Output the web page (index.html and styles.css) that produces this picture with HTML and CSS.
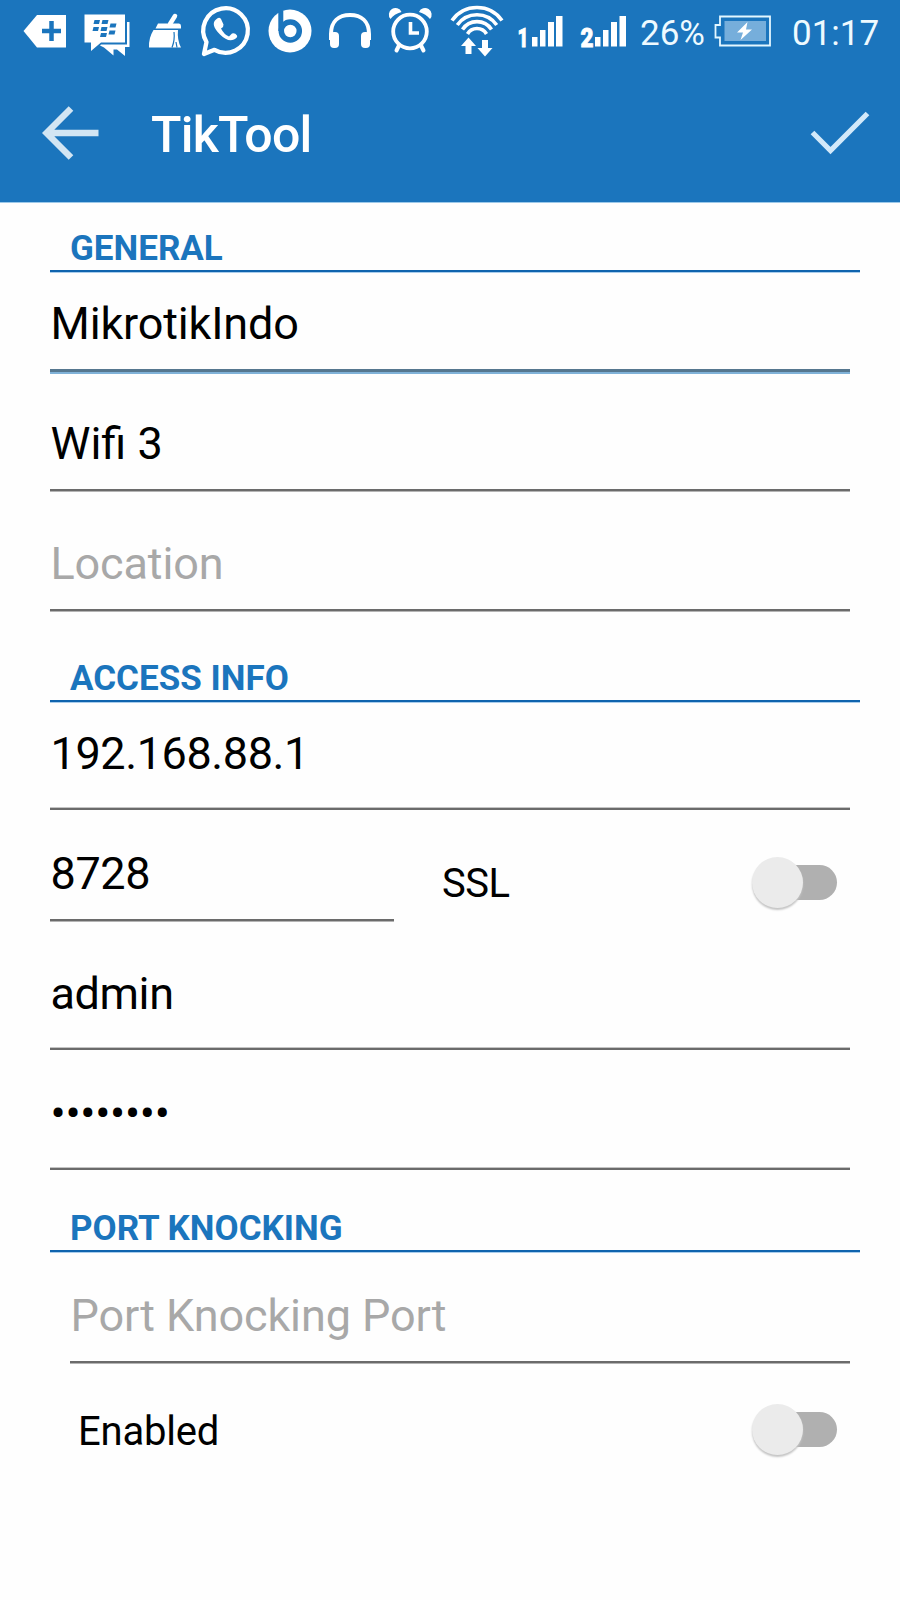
FILE: index.html
```
<!DOCTYPE html>
<html lang="en">
<head>
<meta charset="utf-8">
<title>TikTool</title>
<link rel="stylesheet" href="styles.css">
</head>
<body>
<header class="top">
  <div class="status">
    <svg width="75" height="70" viewBox="0 0 75 70"><path fill="#fff" d="M23.500 31L37 15H66V47.500H37Z"/><path stroke="#1b75bd" stroke-width="4.500" d="M51.500 21V41M42 31H61"/></svg>
    <svg width="65" height="70" viewBox="75 0 65 70"><path fill="#fff" d="M127 22H129.500V47H125V56L117 49.500L113.500 49.500V55.500L104 47.500L100 45.500L101 44.500H127Z"/><path fill="#fff" d="M84.500 14.500H125V42.500H101L91 51V42.500H84.500Z"/><path fill="#1b75bd" d="M94.500 20h5.500l-1 4h-5.500zM102.500 20h6l-1 4h-6zM93.500 27h5.500l-1 4h-5.500zM101.500 27h6l-1 4h-6zM110.500 23.500h6l-1 4h-6zM109.500 30.500h6l-1 4h-6zM101 33h6l-1 4h-6z"/></svg>
    <svg width="50" height="70" viewBox="140 0 50 70"><path stroke="#fff" stroke-width="4.500" stroke-linecap="round" d="M175 16L170 24"/><path fill="#fff" d="M158 23.500H179Q181 23.500 181 26V28.500H155.500ZM153.500 30H178Q177 40 181 47.500H149Q148.500 38 153.500 30Z"/><path stroke="#1b75bd" stroke-width="1.200" fill="none" d="M172 47.500Q175 40 174 32M177 47.500L176 42"/></svg>
    <svg width="70" height="70" viewBox="190 0 70 70"><path fill="none" stroke="#fff" stroke-width="4.300" stroke-linejoin="round" d="M206.500 42A22.300 22.300 0 1 1 214.500 49.800L204 54Z"/><path fill="#fff" d="M216 19.500Q219 16.500 221 19L223.500 24.500Q224 26.500 221 28.500Q224 34.500 229 36.500L232 33.500Q235 32.500 237 35.500Q238 37.500 234 39.500Q228 42.500 220 34.500Q210 24.500 216 19.500Z"/></svg>
    <svg width="60" height="70" viewBox="260 0 60 70"><circle cx="290" cy="31" r="21.500" fill="#fff"/><circle cx="290.300" cy="31" r="9" fill="none" stroke="#1b75bd" stroke-width="5.500"/><path stroke="#1b75bd" stroke-width="5" d="M280.800 11V31"/></svg>
    <svg width="60" height="70" viewBox="320 0 60 70"><path fill="none" stroke="#fff" stroke-width="4" d="M331 40V34C331 21 339 15 350 15S369 21 369 34V40"/><rect x="330" y="32" width="9" height="16" rx="4" fill="#fff"/><rect x="361" y="32" width="9" height="16" rx="4" fill="#fff"/></svg>
    <svg width="65" height="70" viewBox="380 0 65 70"><circle cx="410" cy="31.500" r="16.800" fill="none" stroke="#fff" stroke-width="3.800"/><path fill="none" stroke="#fff" stroke-width="3.600" d="M410.500 22V33H419"/><path stroke="#fff" stroke-width="4" stroke-linecap="round" d="M399 45.500L396.500 50.500M421 45.500L423.500 50.500"/><path fill="#fff" d="M390.500 19A6.600 6.600 0 1 1 401.500 12Q394 14 390.500 19ZM430 19A6.600 6.600 0 1 0 419 12Q426 14 430 19Z"/></svg>
    <svg width="65" height="70" viewBox="445 0 65 70"><g fill="none" stroke="#fff" stroke-width="3.600"><path d="M452 20.500A30.500 30.500 0 0 1 502 20.500M457.300 25A24 24 0 0 1 496.700 25M462.500 29.500A17.300 17.300 0 0 1 491.500 29.500M467.500 34A11 11 0 0 1 486.500 34"/></g><path fill="#fff" d="M468.500 37.500L476 46H471.500V54H465.500V46H461ZM485 56.500L477.500 48H482V40H488V48H492.500Z"/></svg>
    <svg width="60" height="70" viewBox="510 0 60 70"><text class="sim" x="517.500" y="46.500" textLength="11" lengthAdjust="spacingAndGlyphs">1</text><path fill="#fff" d="M532 37h5.500v9.500H532zM540 30h5.500v16.500H540zM548 22h6v24.500h-6zM556 16h6.500v30.500H556z"/></svg>
    <svg width="62" height="70" viewBox="570 0 62 70"><text class="sim" x="580.500" y="46.500" textLength="13" lengthAdjust="spacingAndGlyphs">2</text><path fill="#fff" d="M595 37h5.500v9.500H595zM603 30h5.500v16.500H603zM611 22h6v24.500h-6zM619.500 16h6.500v30.500h-6.500z"/></svg>
    <span class="percent">26%</span>
    <svg width="63" height="70" viewBox="712 0 63 70"><path fill="none" stroke="#e3f7ff" stroke-width="1.800" d="M720 16.500H770V45.500H720V37.500H715.500V25H720Z"/><path fill="#76aedb" d="M724.500 21H766V41H724.500Z"/><path fill="#fff" d="M747.500 22L737 32.500H743L740.500 40L752 29.500H746Z"/></svg>
    <span class="clock">01:17</span>
  </div>
  <div class="bar">
    <svg class="back" width="57" height="54" viewBox="0 0 57 54"><path fill="none" stroke="#d2e5f3" stroke-width="6.500" d="M29 2.500L4.500 27L29 51.500M5 27H56.500"/></svg>
    <h1 class="title">TikTool</h1>
    <svg class="done" width="60" height="46" viewBox="0 0 60 46"><path fill="none" stroke="#d2e9fa" stroke-width="5.200" d="M2.500 22.500L20.500 40.500L57.500 3.500"/></svg>
  </div>
</header>
<main class="form">
  <h2 class="heading general"><span>GENERAL</span></h2>
  <div class="field name"><span>MikrotikIndo</span></div>
  <div class="field wifi"><span>Wifi 3</span></div>
  <div class="field location hint"><span>Location</span></div>
  <h2 class="heading access"><span>ACCESS INFO</span></h2>
  <div class="field ip over"><span>192.168.88.1</span></div>
  <div class="row">
    <div class="field port"><span>8728</span></div>
    <div class="toggle ssl"><span class="label">SSL</span><span class="switch"></span></div>
  </div>
  <div class="field user over"><span>admin</span></div>
  <div class="field password over"><span>••••••••</span></div>
  <h2 class="heading knocking"><span>PORT KNOCKING</span></h2>
  <div class="field knock hint"><span>Port Knocking Port</span></div>
  <div class="toggle enabled"><span class="label">Enabled</span><span class="switch"></span></div>
</main>
</body>
</html>
```
FILE: styles.css
```
* { box-sizing: border-box; }
body { margin: 0; height: 1600px; background: #fefefe; font-family: Roboto, sans-serif; color: #000; overflow: hidden; }
.top { height: 202px; background: #1b75bd; box-shadow: 0 1px 0 #9cc9ea; }
.status { display: flex; height: 70px; color: #eefaff; font-size: 35px; line-height: 68px; white-space: nowrap; }
.status svg { flex: none; display: block; }
.sim { font: 900 25px Roboto, sans-serif; fill: #fff; stroke: #fff; stroke-width: 0.8px; }
.percent { width: 80px; padding-left: 8px; }
.clock { padding-left: 17px; }
.bar { display: flex; align-items: center; height: 126px; padding: 0 30px 2px 42px; }
.title { margin: 6px 0 0 52px; color: #fff; font-size: 50px; font-weight: 500; line-height: 60px; letter-spacing: -0.75px; }
.back { margin-top: 1px; }
.done { margin: 2px 0 0 auto; }
.form { padding-left: 50px; }
.heading { display: flex; align-items: flex-end; width: 810px; margin: 0; padding: 0 0 1px 20px; border-bottom: 2px solid #0f64ae; box-shadow: 0 1px 0 #a9cdec; color: #1b75bd; font-size: 35px; line-height: 40px; font-weight: 700; }
.general { height: 70px; }
.access { height: 90px; }
.knocking { height: 82px; }
.field { width: 800px; margin-bottom: 1px; border-bottom: 2px solid #6b6b6b; box-shadow: 0 1px 0 #b4b4b4; font-size: 45px; line-height: 60px; white-space: nowrap; }
.field span { display: block; padding-left: 0.5px; letter-spacing: -0.15px; }
.over { margin-bottom: 0; box-shadow: inset 0 -1px 0 #c4c4c4; }
.hint { color: #a8a8a8; }
.name { height: 100px; margin-bottom: 2px; padding-top: 22px; border-bottom: 3px solid #56778f; box-shadow: 0 2px 0 #80b2d8; }
.wifi { height: 117px; padding-top: 40px; }
.wifi span { letter-spacing: normal; }
.location { height: 119px; padding-top: 42px; }
.ip { height: 108px; padding-top: 22px; }
.ip span, .port span { letter-spacing: -0.4px; }
.row { display: flex; height: 112px; }
.port { width: 344px; height: 111px; padding-top: 34px; }
.user { height: 128px; padding-top: 42px; }
.user span { letter-spacing: -0.4px; }
.password { height: 120px; padding-top: 34px; }
.password span { letter-spacing: -0.3px; }
.knock { width: 780px; height: 111px; margin-left: 20px; padding-top: 34px; }
.knock span { letter-spacing: -0.1px; }
.toggle { display: flex; justify-content: space-between; align-items: center; font-size: 40px; line-height: 50px; letter-spacing: -0.2px; }
.ssl { flex: none; width: 395px; height: 51px; margin: 47px 0 0 48px; }
.enabled { width: 759px; height: 51px; margin: 41px 0 0 28px; }
.label { padding-top: 4px; }
.ssl .label { padding-top: 2px; letter-spacing: -0.5px; }
.switch { width: 85px; height: 51px; display: flex; align-items: center; }
.switch::before { content: ""; width: 51px; height: 51px; border-radius: 50%; background: #ebebeb; box-shadow: 0 2px 2px #c4c4c4; z-index: 1; }
.switch::after { content: ""; width: 59px; height: 35px; margin-left: -25px; border-radius: 18px; background: #b0b0b0; }
```
